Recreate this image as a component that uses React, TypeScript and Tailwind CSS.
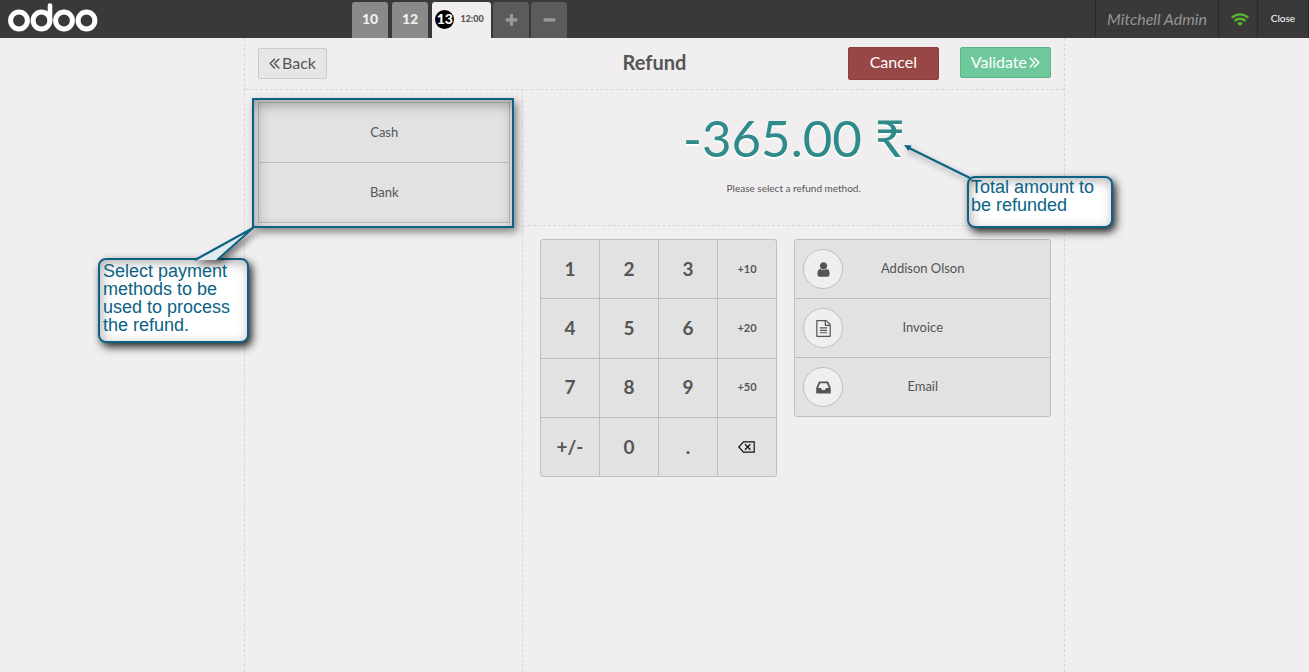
import type { ReactNode } from "react";

const USER =
  "M1536 1399q0 109-62.5 187t-150.5 78h-854q-88 0-150.5-78t-62.5-187q0-85 8.5-160.5t31.5-152 58.5-131 94-89 134.5-34.5q131 128 313 128t313-128q76 0 134.5 34.5t94 89 58.5 131 31.5 152 8.5 160.5zm-256-887q0 159-112.5 271.5t-271.5 112.5-271.5-112.5-112.5-271.5 112.5-271.5 271.5-112.5 271.5 112.5 112.5 271.5z";
const FILE =
  "M1596 380q28 28 48 76t20 88v1152q0 40-28 68t-68 28h-1344q-40 0-68-28t-28-68v-1600q0-40 28-68t68-28h896q40 0 88 20t76 48zm-444-244v376h376q-10-29-22-41l-313-313q-12-12-41-22zm384 1528v-1024h-416q-40 0-68-28t-28-68v-416h-768v1536h1280zm-1024-864q0-14 9-23t23-9h704q14 0 23 9t9 23v64q0 14-9 23t-23 9h-704q-14 0-23-9t-9-23v-64zm736 224q14 0 23 9t9 23v64q0 14-9 23t-23 9h-704q-14 0-23-9t-9-23v-64q0-14 9-23t23-9h704zm0 256q14 0 23 9t9 23v64q0 14-9 23t-23 9h-704q-14 0-23-9t-9-23v-64q0-14 9-23t23-9h704z";
const INBOX =
  "M1151 960h316q-1-3-2.5-8.5t-2.5-7.5l-212-496h-708l-212 496q-1 3-2.5 8.5t-2.5 7.5h316l95 192h320zm513 30v482q0 26-19 45t-45 19h-1408q-26 0-45-19t-19-45v-482q0-62 25-123l238-552q10-25 36.5-42t52.5-17h832q26 0 52.5 17t36.5 42l238 552q25 61 25 123z";
const PLUS =
  "M1600 736v192q0 40-28 68t-68 28h-416v416q0 40-28 68t-68 28h-192q-40 0-68-28t-28-68v-416h-416q-40 0-68-28t-28-68v-192q0-40 28-68t68-28h416v-416q0-40 28-68t68-28h192q40 0 68 28t28 68v416h416q40 0 68 28t28 68z";
const MINUS =
  "M1600 736v192q0 40-28 68t-68 28h-1216q-40 0-68-28t-28-68v-192q0-40 28-68t68-28h1216q40 0 68 28t28 68z";

function Glyph({ d, className }: { d: string; className: string }) {
  return (
    <svg viewBox="0 0 1792 1792" fill="currentColor" className={className} aria-hidden="true">
      <path d={d} />
    </svg>
  );
}

function Chevrons({ right = false }: { right?: boolean }) {
  return (
    <svg viewBox="0 0 10 12" className="h-[13px] w-[11px]" fill="none" stroke="currentColor" strokeWidth="1.4" strokeLinecap="round" strokeLinejoin="round" aria-hidden="true">
      <path d={right ? "M1 3l4 4-4 4M5 3l4 4-4 4" : "M5 3L1 7l4 4M9 3L5 7l4 4"} />
    </svg>
  );
}

function Logo() {
  return (
    <svg viewBox="0 0 90 30" className="h-[30px] w-[90px]" fill="none" stroke="#fff" strokeWidth="5" role="img" aria-label="Odoo">
      <circle cx="11" cy="17.5" r="8.4" />
      <circle cx="33.5" cy="17.5" r="8.4" />
      <circle cx="56" cy="17.5" r="8.4" />
      <circle cx="78.5" cy="17.5" r="8.4" />
      <path d="M42 17.5V2.500" strokeWidth="4.6" strokeLinecap="round" />
    </svg>
  );
}

function Wifi() {
  return (
    <svg viewBox="0 0 18 13" className="h-[13px] w-[18px]" fill="none" stroke="#5cb531" strokeWidth="2.300" aria-hidden="true">
      <path d="M.8 4.800C5.500.2 12.500.2 17.200 4.800M3.600 7.900c3-2.900 7.800-2.900 10.800 0" />
      <path d="M6.100 10.300Q9 7.800 11.900 10.300L9 13z" fill="#5cb531" stroke="none" />
    </svg>
  );
}

function Backspace() {
  return (
    <svg viewBox="0 0 17 12" className="h-[12px] w-[17px]" fill="none" stroke="#111" strokeWidth="1.200" role="img" aria-label="Backspace">
      <path d="M5.500.8h10.700v10.400H5.500L.8 6z" />
      <path d="M7 3.300l5.400 5.400M12.400 3.300L7 8.700" strokeWidth="1.300" />
    </svg>
  );
}

function TopBar() {
  const order = "flex h-9 items-center justify-center rounded-t-[3px]";
  return (
    <header className="flex h-[38px] bg-[#393939] text-white">
      <div className="flex w-[352px] items-start pt-[3px] pl-2">
        <Logo />
      </div>
      <nav aria-label="Orders" className="flex flex-1 items-end">
        <button className={`${order} mr-1 w-9 bg-[#8a8a8a] pb-0.5 text-sm font-black text-[#eee]`}>10</button>
        <button className={`${order} mr-1 w-9 bg-[#8a8a8a] pb-0.5 text-sm font-black text-[#eee]`}>12</button>
        <button className={`${order} mr-0.5 w-[59px] gap-1.5 bg-[#f0eeee] pr-1 pb-0.5`}>
          <span className="flex size-[19px] items-center justify-center rounded-full bg-black text-sm font-black">13</span>
          <span className="text-[9px] font-black text-[#555]">12:00</span>
        </button>
        <button aria-label="New order" className={`${order} mr-0.5 w-9 bg-[#5b5b5b] text-[#999]`}>
          <Glyph d={PLUS} className="size-[15px]" />
        </button>
        <button aria-label="Delete order" className={`${order} w-9 bg-[#5b5b5b] text-[#999]`}>
          <Glyph d={MINUS} className="size-[15px]" />
        </button>
      </nav>
      <div className="flex items-center border-l border-[#292929] px-[11px] text-base text-[#949494] italic">Mitchell Admin</div>
      <div className="flex w-[39px] items-center justify-center border-l border-[#292929] pl-1">
        <Wifi />
      </div>
      <button className="w-[52px] border-x border-[#292929] pb-0.5 text-[10px]">Close</button>
    </header>
  );
}

function Callout({ className, children }: { className: string; children: ReactNode }) {
  return (
    <p
      className={`absolute rounded-lg border-2 border-[#0b6285] bg-white font-['Liberation_Sans',sans-serif] text-lg/[18px] text-[#0b6285] shadow-[3px_4px_8px_rgba(0,0,0,0.85),inset_2px_3px_12px_rgba(0,0,0,0.3)] ${className}`}
    >
      {children}
    </p>
  );
}

function PaymentMethods() {
  return (
    <div className="relative mt-3 mr-3 ml-[13px] border border-[#bfbfbf] bg-[#e2e2e2]">
      <button className="block h-[60px] w-full border-b border-[#bfbfbf] text-[13px]">Cash</button>
      <button className="block h-[59px] w-full text-[13px]">Bank</button>
      <div className="pointer-events-none absolute -top-[5px] -right-[5px] -bottom-[6px] -left-[7px] border-2 border-[#0b6285] shadow-[3px_4px_8px_rgba(0,0,0,0.45),inset_2px_4px_14px_rgba(0,0,0,0.35)]" />
      <svg viewBox="0 0 62 36" className="pointer-events-none absolute top-[124px] -left-[67px] z-20 h-[36px] w-[62px] overflow-visible drop-shadow-[3px_4px_3px_rgba(0,0,0,0.5)]" aria-hidden="true">
        <path d="M3 33L61 1 25 33" fill="#e1eaed" stroke="#0b6285" strokeWidth="2" strokeLinejoin="round" />
      </svg>
      <Callout className="top-[155px] -left-[161px] z-10 h-[85px] w-[151px] px-[3px] pt-0.5">
        Select payment methods to be used to process the refund.
      </Callout>
    </div>
  );
}

const KEYS = ["1", "2", "3", "+10", "4", "5", "6", "+20", "7", "8", "9", "+50", "+/-", "0", ".", "back"];

function Numpad() {
  return (
    <div className="grid h-[238px] w-[237px] shrink-0 grid-cols-4 grid-rows-4 gap-px overflow-hidden rounded-[3px] border border-[#bfbfbf] bg-[#bfbfbf]">
      {KEYS.map((key) => (
        <button key={key} className={`flex items-center justify-center bg-[#e2e2e2] pr-px font-bold ${key.length === 3 && key !== "+/-" ? "text-[11px]" : "text-[19px]"}`}>
          {key === "back" ? <Backspace /> : key}
        </button>
      ))}
    </div>
  );
}

const OPTIONS = [
  { label: "Addison Olson", icon: USER },
  { label: "Invoice", icon: FILE },
  { label: "Email", icon: INBOX },
];

function OrderOptions() {
  return (
    <div className="flex-1 divide-y divide-[#bfbfbf] self-start rounded-[3px] border border-[#bfbfbf] bg-[#e2e2e2]">
      {OPTIONS.map(({ label, icon }) => (
        <button key={label} className="grid h-[59px] w-full grid-cols-[40px_1fr_40px] items-center px-2 text-[13px] last:h-[58px]">
          <span className="flex size-10 items-center justify-center rounded-full border border-[#bfbfbf] bg-[#efefef]">
            <Glyph d={icon} className="size-[17px]" />
          </span>
          <span>{label}</span>
        </button>
      ))}
    </div>
  );
}

export default function App() {
  return (
    <div className="flex min-h-screen flex-col bg-[#f0eeee] font-[Lato,sans-serif] text-[#555]">
      <TopBar />
      <main className="mx-auto flex w-full max-w-[821px] flex-1 flex-col border-x border-dashed border-[#d6d6d6]">
        <div className="grid h-[52px] grid-cols-[1fr_auto_1fr] items-center border-b border-dashed border-[#d6d6d6] px-[13px]">
          <button className="flex h-[31px] items-center gap-0.5 justify-self-start rounded-xs border border-[#cacaca] bg-[#e6e6e6] px-2.5 pb-0.5 text-base">
            <Chevrons />
            Back
          </button>
          <h1 className="pb-1 text-xl font-bold">Refund</h1>
          <div className="flex items-start gap-[21px] justify-self-end">
            <button className="h-[33px] w-[91px] rounded-xs border border-[#8c4040] bg-[#994646] pb-1 text-base text-white">Cancel</button>
            <button className="flex h-[31px] items-center gap-0.5 rounded-xs border border-[#5fb487] bg-[#6ec89b] px-2.5 pb-0.5 text-base text-white">
              Validate
              <Chevrons right />
            </button>
          </div>
        </div>
        <div className="grid flex-1 grid-cols-[34%_1fr]">
          <section aria-label="Payment methods" className="border-r border-dashed border-[#d6d6d6]">
            <PaymentMethods />
          </section>
          <section aria-label="Refund amount">
            <div className="relative flex h-[136px] flex-col items-center border-b border-dashed border-[#d6d6d6] pt-[17px]">
              <p className="text-[51px]/[62px] text-[#2f8a8a] [text-shadow:0_2px_1px_#fff]">-365.00 ₹</p>
              <p className="mt-3 text-[10px]/[14px]">Please select a refund method.</p>
              <Callout className="top-[86px] -right-[49px] z-10 h-[52px] w-[146px] px-0.5">Total amount to be refunded</Callout>
              <svg viewBox="0 0 70 36" className="pointer-events-none absolute top-[54px] right-[90px] z-20 h-[36px] w-[70px] overflow-visible drop-shadow-[3px_4px_3px_rgba(0,0,0,0.4)]" aria-hidden="true">
                <path d="M3 3L66 34" stroke="#0b6285" strokeWidth="2" />
                <path d="M0 1L7.500 1.500 4.500 7z" fill="#0b6285" />
              </svg>
            </div>
            <div className="flex gap-[17px] pt-[13px] pr-[13px] pl-[17px]">
              <Numpad />
              <OrderOptions />
            </div>
          </section>
        </div>
      </main>
    </div>
  );
}
